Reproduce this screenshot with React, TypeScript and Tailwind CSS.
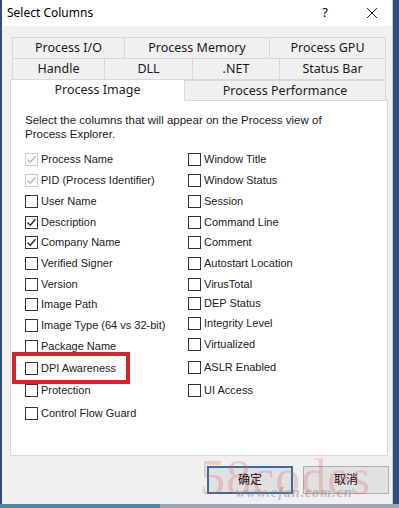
import React from "react";

type Item = { label: string; state: "off" | "on" | "dis"; h: string };

const left: Item[] = [
  { label: "Process Name", state: "dis", h: "h-[22px]" },
  { label: "PID (Process Identifier)", state: "dis", h: "h-[21px]" },
  { label: "User Name", state: "off", h: "h-[21px]" },
  { label: "Description", state: "on", h: "h-[20px]" },
  { label: "Company Name", state: "on", h: "h-[21px]" },
  { label: "Verified Signer", state: "off", h: "h-[21px]" },
  { label: "Version", state: "off", h: "h-[20px]" },
  { label: "Image Path", state: "off", h: "h-[21px]" },
  { label: "Image Type (64 vs 32-bit)", state: "off", h: "h-[21px]" },
  { label: "Package Name", state: "off", h: "h-[21px]" },
  { label: "DPI Awareness", state: "off", h: "h-[22px]" },
  { label: "Protection", state: "off", h: "h-[23px]" },
  { label: "Control Flow Guard", state: "off", h: "h-[23px]" },
];

const right: Item[] = [
  { label: "Window Title", state: "off", h: "h-[22px]" },
  { label: "Window Status", state: "off", h: "h-[21px]" },
  { label: "Session", state: "off", h: "h-[21px]" },
  { label: "Command Line", state: "off", h: "h-[20px]" },
  { label: "Comment", state: "off", h: "h-[21px]" },
  { label: "Autostart Location", state: "off", h: "h-[21px]" },
  { label: "VirusTotal", state: "off", h: "h-[20px]" },
  { label: "DEP Status", state: "off", h: "h-[19px]" },
  { label: "Integrity Level", state: "off", h: "h-[21px]" },
  { label: "Virtualized", state: "off", h: "h-[21px]" },
  { label: "ASLR Enabled", state: "off", h: "h-[24px]" },
  { label: "UI Access", state: "off", h: "h-[23px]" },
];

function Box({ state }: { state: Item["state"] }) {
  const dis = state === "dis";
  return (
    <div
      className={
        "w-[13px] h-[13px] border bg-white flex items-center justify-center shrink-0 " +
        (dis ? "border-[#cccccc]" : "border-[#333333]")
      }
    >
      {state !== "off" && (
        <svg width="11" height="11" viewBox="0 0 11 11">
          <path
            d="M1.5 5.5 L4.2 8.2 L9.5 2.2"
            fill="none"
            stroke={dis ? "#b5b5b5" : "#222222"}
            strokeWidth="1.3"
          />
        </svg>
      )}
    </div>
  );
}

function Row({ it }: { it: Item }) {
  return (
    <div className={"flex items-center gap-[3px] " + it.h}>
      <Box state={it.state} />
      <span className="text-[11px] text-[#1a1a1a] leading-none whitespace-nowrap">
        {it.label}
      </span>
    </div>
  );
}

function Tab({ label, w, cls = "" }: { label: string; w: string; cls?: string }) {
  return (
    <div
      className={
        "flex items-center justify-center border border-[#d9d9d9] -ml-px first:ml-0 bg-[#f0f0f0] text-[12.5px] text-[#1a1a1a] " +
        w +
        " " +
        cls
      }
    >
      {label}
    </div>
  );
}

export default function App() {
  return (
    <div
      className="w-[399px] h-[508px] bg-[#2f4f7a] flex relative overflow-hidden"
      style={{ fontFamily: '"Noto Sans", "Liberation Sans", "Noto Sans CJK SC", sans-serif' }}
    >
      <div className="ml-[2px] w-[391px] h-[504px] bg-[#f0f0f0] flex flex-col border-r border-[#c8d0da]">
        {/* title bar */}
        <div className="h-[26px] bg-white flex items-center pl-[5px] shrink-0">
          <span className="text-[12px] text-black">Select Columns</span>
          <div className="flex-1" />
          <span className="text-[13px] text-black mr-[38px]">?</span>
          <svg width="12" height="12" viewBox="0 0 12 12" className="mr-[14px]">
            <path d="M1 1 L11 11 M11 1 L1 11" stroke="#222" strokeWidth="1" />
          </svg>
        </div>

        {/* tabs */}
        <div className="pt-[11px] pl-[8px] flex flex-col">
          <div className="flex h-[22px] ml-[2px]">
            <Tab label="Process I/O" w="w-[113px]" />
            <Tab label="Process Memory" w="w-[146px]" />
            <Tab label="Process GPU" w="w-[117px]" />
          </div>
          <div className="flex h-[22px] ml-[2px] -mt-px">
            <Tab label="Handle" w="w-[93px]" />
            <Tab label="DLL" w="w-[89px]" />
            <Tab label=".NET" w="w-[88px]" />
            <Tab label="Status Bar" w="w-[107px]" />
          </div>
          <div className="flex items-end h-[22px] -mt-px relative z-10">
            <div className="w-[175px] h-[22px] bg-white border border-[#d9d9d9] border-b-0 flex items-center justify-center text-[12.5px] text-[#1a1a1a]">
              Process Image
            </div>
            <div className="w-[202px] h-[21px] -ml-px bg-[#f0f0f0] border border-[#d9d9d9] flex items-center justify-center text-[12.5px] text-[#1a1a1a] pt-[2px]">
              Process Performance
            </div>
          </div>

          {/* panel */}
          <div className="w-[378px] h-[356px] -mt-px bg-white border border-[#d9d9d9] relative">
            <div
              className="pl-[14px] pt-[12px] text-[11.5px] leading-[14px] text-[#1a1a1a]"
              style={{ fontFamily: '"Liberation Sans", Arial, sans-serif' }}
            >
              <p>Select the columns that will appear on the Process view of</p>
              <p>Process Explorer.</p>
            </div>
            <div
              className="flex pl-[14px] pt-[7px]"
              style={{ fontFamily: '"Liberation Sans", Arial, sans-serif' }}
            >
              <div className="w-[163px] flex flex-col">
                {left.map((it) => (
                  <Row key={it.label} it={it} />
                ))}
              </div>
              <div className="flex flex-col">
                {right.map((it) => (
                  <Row key={it.label} it={it} />
                ))}
              </div>
            </div>
            {/* red highlight */}
            <div className="absolute left-[1px] top-[251px] w-[118px] h-[32px] border-[4px] border-[#d8222c]" />
          </div>
        </div>

        {/* buttons */}
        <div className="flex justify-end gap-[10px] pr-[3px] mt-[10px]">
          <div className="w-[86px] h-[28px] border-2 border-[#2f6fa6] bg-[#e1e1e1] flex items-center justify-center text-[12px] text-black">
            确定
          </div>
          <div className="w-[86px] h-[28px] border border-[#adadad] bg-[#e1e1e1] flex items-center justify-center text-[12px] text-black">
            取消
          </div>
        </div>
      </div>

      {/* bottom accent */}
      <div className="absolute left-0 bottom-0 w-[160px] h-[4px] bg-[#3e8fa8]" />
      <div className="absolute left-[160px] bottom-0 w-[239px] h-[4px] bg-[#9aa7b3]" />

      {/* watermark */}
      <div
        className="absolute left-[200px] top-[452px] text-[50px] leading-none tracking-[1px] text-[#e05a5a] opacity-25 pointer-events-none"
        style={{ fontFamily: '"Liberation Serif", serif' }}
      >
        58codes
      </div>
      <div
        className="absolute left-[236px] top-[486px] text-[14px] italic font-bold leading-none tracking-[1px] text-[#8a8a8a] opacity-50 pointer-events-none"
        style={{ fontFamily: '"Liberation Serif", serif' }}
      >
        www.cfan.com.cn
      </div>
    </div>
  );
}
